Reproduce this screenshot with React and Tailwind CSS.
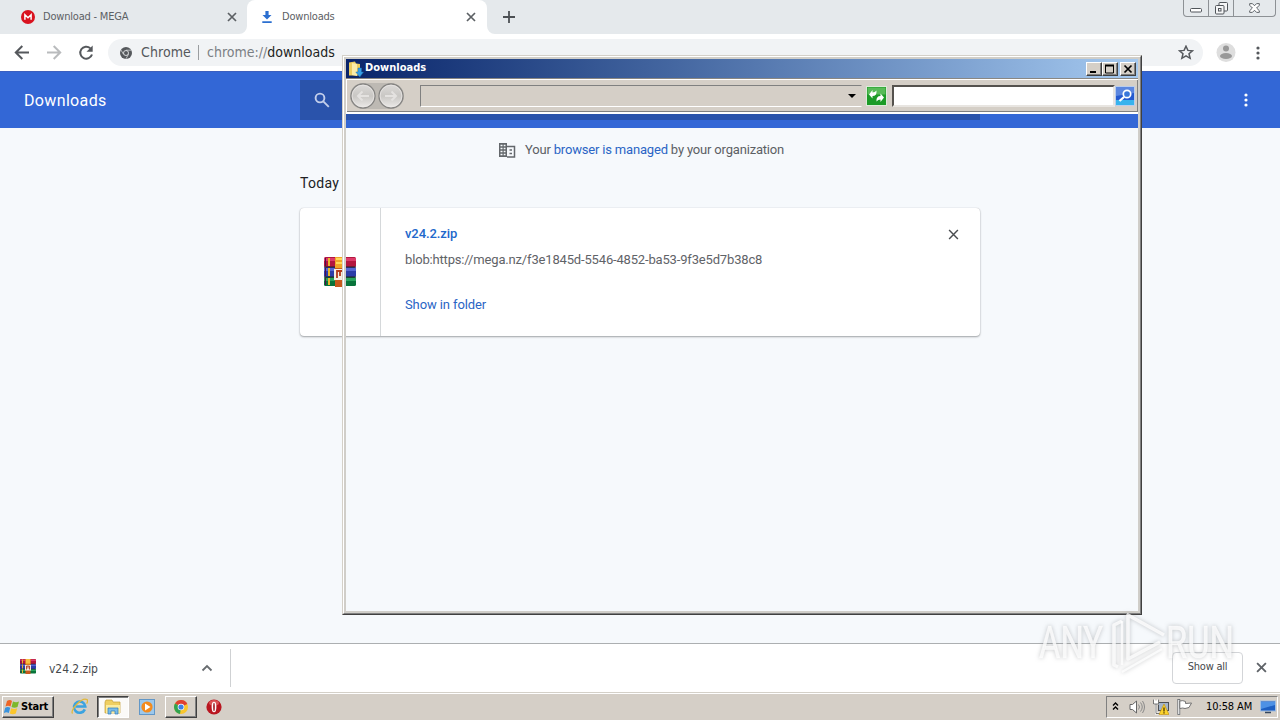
import React from 'react';

const TAHOMA = "font-['DejaVu_Sans_Condensed','DejaVu_Sans',sans-serif]";

const WinrarIcon = ({ className }) => (
    <svg viewBox="0 0 32 30" className={className}>
        <rect x="0" y="0" width="32" height="10" rx="1.5" fill="#b3163f" />
        <rect x="0" y="1" width="32" height="3" fill="#dc3a68" />
        <rect x="0" y="10" width="32" height="10" rx="1.5" fill="#2c3da8" />
        <rect x="0" y="11" width="32" height="3" fill="#5566d2" />
        <rect x="0" y="20" width="32" height="9" rx="1.5" fill="#08733a" />
        <rect x="0" y="21" width="32" height="3" fill="#2aa35d" />
        <path d="M0 10h32M0 20h32" stroke="#222" strokeWidth="1" />
        <path d="M5 1v8M5 11v8M5 21v7" stroke="#e9b62c" strokeWidth="2" />
        <path d="M1.500 1v8M1.500 11v8M1.500 21v7" stroke="#501050" strokeWidth="1" />
        <rect x="11" y="0" width="10" height="30" fill="#c8591d" />
        <path d="M11 0h10v11H11z" fill="#f0a528" />
        <path d="M12 2h8M12 6h8" stroke="#ffd95a" strokeWidth="2" />
        <path d="M10 12h12v11H10z" fill="#f4efe4" />
        <path d="M13 21v-7h6v7M16 14v5" fill="none" stroke="#b33a1c" strokeWidth="1.800" />
    </svg>
);

const CloseIcon = ({ className, strokeWidth = 1.7 }) => (
    <svg viewBox="0 0 10 10" className={className}>
        <path d="M1 1l8 8M9 1l-8 8" stroke="currentColor" strokeWidth={strokeWidth} />
    </svg>
);

const DotsIcon = ({ className }) => (
    <svg viewBox="0 0 4 14" className={className} fill="currentColor">
        <circle cx="2" cy="2" r="1.6" />
        <circle cx="2" cy="7" r="1.6" />
        <circle cx="2" cy="12" r="1.6" />
    </svg>
);

const TabStrip = () => (
    <div className="relative flex h-[34px] shrink-0 bg-[#e5e9ec] text-[#5c6064]">
        <div className="flex w-[247px] items-center pl-[21px]">
            <svg viewBox="0 0 14 14" className="h-[14px] w-[14px]">
                <circle cx="7" cy="7" r="7" fill="#d9121f" />
                <path d="M3.900 9.700V4.800L7 7.700l3.100-2.900v4.900" fill="none" stroke="#fff" strokeWidth="1.500" />
            </svg>
            <span className="ml-2 w-[183px] pt-px text-[11px] tracking-[-0.2px]">Download - MEGA</span>
            <CloseIcon className="ml-[1px] h-[10px] w-[10px]" />
        </div>
        <div className="relative flex w-[240px] items-center rounded-t-lg bg-white pl-[15px]">
            <svg viewBox="0 0 8 8" className="absolute bottom-0 -left-2 h-2 w-2"><path d="M8 0v8H0a8 8 0 0 0 8-8" fill="#fff" /></svg>
            <svg viewBox="0 0 8 8" className="absolute -right-2 bottom-0 h-2 w-2"><path d="M0 0v8h8a8 8 0 0 1-8-8" fill="#fff" /></svg>
            <svg viewBox="0 0 10 12" className="h-3 w-[10px]" fill="#2b6fd0">
                <path d="M3.400 0h3.200v4H9.500L5 8.500.5 4h2.900zM.300 10.300h9.400V12H.300z" />
            </svg>
            <span className="ml-[10px] w-[184px] pt-px text-[11px] tracking-[-0.2px]">Downloads</span>
            <CloseIcon className="h-[10px] w-[10px]" />
        </div>
        <svg viewBox="0 0 12 12" className="mt-[11px] ml-4 h-3 w-3">
            <path d="M6 0v12M0 6h12" stroke="#4c5054" strokeWidth="1.800" />
        </svg>
        <div className="mr-[4px] ml-auto flex h-[17px] w-[93px] rounded-b-[4px] border border-t-0 border-[#8d9195] text-[#50555a]">
            <div className="flex w-[25px] items-center justify-center border-r border-[#8d9195]">
                <svg viewBox="0 0 12 5" className="mt-[4px] h-[5px] w-3"><rect x=".5" y=".5" width="11" height="3.500" rx="1" fill="#fff" stroke="currentColor" /></svg>
            </div>
            <div className="flex w-[25px] items-center justify-center border-r border-[#8d9195]">
                <svg viewBox="0 0 13 13" className="h-[13px] w-[13px]" fill="#f4f5f6" stroke="currentColor">
                    <rect x="4" y=".5" width="8.500" height="8.500" rx="1" />
                    <rect x=".5" y="3.500" width="8.500" height="8.500" rx="1" />
                    <rect x="3.500" y="6.500" width="2.500" height="2.500" />
                </svg>
            </div>
            <div className="flex flex-1 items-center justify-center">
                <svg viewBox="0 0 12 11" className="h-[10px] w-[11px]" fill="#fff" stroke="currentColor">
                    <path d="M.700.700h3L6 3l2.300-2.300h3v1.800L8.300 5.500l3 3v1.800h-3L6 8l-2.300 2.300h-3V8.500l3-3-3-3z" />
                </svg>
            </div>
        </div>
    </div>
);

const AddressBar = () => (
    <div className="flex h-[37px] shrink-0 items-center bg-white pl-[14px] text-[#55585c]">
        <svg viewBox="0 0 16 16" className="h-4 w-4" fill="none" stroke="currentColor" strokeWidth="2">
            <path d="M15 7.500H2M8.300 1L1.800 7.500l6.500 6.500" />
        </svg>
        <svg viewBox="0 0 16 16" className="ml-4 h-4 w-4 text-[#b9bbbd]" fill="none" stroke="currentColor" strokeWidth="2">
            <path d="M1 7.500h13M7.700 1L14.200 7.500l-6.500 6.500" />
        </svg>
        <svg viewBox="0 0 16 16" className="ml-4 h-4 w-4">
            <path d="M14 9.500A6 6 0 1 1 12.300 3.200" fill="none" stroke="currentColor" strokeWidth="2" />
            <path d="M14.700.500v6.200H8.500z" fill="currentColor" />
        </svg>
        <div className="ml-[14px] flex h-[27px] w-[1095px] items-center rounded-full bg-[#f1f3f5] pl-[12px] text-[14px]">
            <svg viewBox="0 0 12 12" className="h-3 w-3">
                <circle cx="6" cy="6" r="6" fill="#55585c" />
                <circle cx="6" cy="6" r="2.500" fill="#55585c" stroke="#e4e6e8" strokeWidth=".9" />
                <path d="M6 3.200h5.300M3.500 7.300L.9 2.900M8.500 7.300L5.900 11.900" stroke="#e4e6e8" strokeWidth=".7" />
            </svg>
            <span className="ml-[9px] w-[50px] whitespace-nowrap tracking-[0.1px]">Chrome</span>
            <span className="mr-[8px] ml-[7px] h-[15px] w-px bg-[#9a9da0]" />
            <span className="whitespace-nowrap text-[#7b7f84]">chrome://<span className="text-[#1d1f22]">downloads</span></span>
            <svg viewBox="0 0 16 16" className="mr-[9px] ml-auto h-4 w-4" fill="none" stroke="currentColor" strokeWidth="1.500">
                <path d="M8 1.200l1.900 4.200 4.600.400-3.500 3 1.100 4.500L8 10.900l-4.100 2.400L5 8.800l-3.500-3 4.600-.400z" />
            </svg>
        </div>
        <svg viewBox="0 0 20 20" className="ml-[13px] h-5 w-5">
            <circle cx="10" cy="9.500" r="9.500" fill="#dedede" />
            <circle cx="10" cy="5.500" r="3" fill="#989898" />
            <ellipse cx="10" cy="13" rx="6" ry="3" fill="#989898" />
        </svg>
        <DotsIcon className="ml-5 h-[14px] w-1" />
    </div>
);

const DownloadsPage = () => (
    <div className="flex-1 bg-[#f6f9fc] font-[Roboto,sans-serif]">
        <div className="flex h-[57px] items-center border-t border-[#3a5fc0] bg-[#3367d6] pl-6 text-white">
            <span className="w-[276px] pt-[2px] text-[16px] tracking-[0.35px]">Downloads</span>
            <div className="flex h-10 w-[680px] items-center bg-[#2a53ab] pl-[14px]">
                <svg viewBox="0 0 16 16" className="h-4 w-4" fill="none" stroke="#c3cfeb" strokeWidth="1.900">
                    <circle cx="6" cy="6" r="4.400" />
                    <path d="M9.300 9.300l5.500 5.500" />
                </svg>
            </div>
            <DotsIcon className="mr-8 ml-auto h-[14px] w-1" />
        </div>
        <div className="mx-auto w-[680px]">
            <div className="flex h-[44px] items-center pl-[198px] text-[13px] text-[#5c6064]">
                <svg viewBox="0 0 18 16" className="mr-[9px] h-4 w-[18px]">
                    <path d="M1 1h8v14H1z" fill="#63676b" />
                    <path d="M9 4.500h7.500V15H9" fill="none" stroke="#63676b" strokeWidth="1.500" />
                    <path d="M2.500 3.500h5M2.500 6.500h5M2.500 9.500h5M2.500 12.500h5" stroke="#f6f9fc" strokeWidth="1.400" strokeDasharray="2 1.200" />
                    <path d="M11.500 8h2.500M11.500 11.500h2.500" stroke="#63676b" strokeWidth="1.700" />
                </svg>
                <span className="whitespace-nowrap tracking-[-0.18px]">Your <span className="text-[#2a65c5]">browser is managed</span> by your organization</span>
            </div>
            <div className="flex h-[36px] items-center pb-[14px] text-[14px] tracking-[0.3px] text-[#202124]">Today</div>
            <div className="flex h-[128px] rounded-[4px] bg-white shadow-[0_1px_2px_rgba(60,64,67,0.45),0_0_1px_rgba(60,64,67,0.3)]">
                <div className="flex w-[81px] items-center justify-center border-r border-[#d5d8da]">
                    <WinrarIcon className="h-[30px] w-8" />
                </div>
                <div className="relative flex-1 pl-6 text-[13px] leading-4 text-[#5f6368]">
                    <div className="mt-[18px] font-medium tracking-[-0.1px] text-[#2268cb]">v24.2.zip</div>
                    <div className="mt-[10px] whitespace-nowrap tracking-[-0.165px]">blob:https://mega.nz/f3e1845d-5546-4852-ba53-9f3e5d7b38c8</div>
                    <div className="mt-[29px] tracking-[-0.1px] text-[#2a65c5]">Show in folder</div>
                    <CloseIcon strokeWidth={1.3} className="absolute top-[21px] right-[21px] h-[11px] w-[11px] text-[#4a4d50]" />
                </div>
            </div>
        </div>
    </div>
);

const DownloadShelf = () => (
    <div className="flex h-[49px] shrink-0 items-center border-t border-[#acafb1] bg-white text-[#45484b]">
        <div className="flex h-[38px] w-[231px] items-center border-r border-[#cfd1d3] pl-5">
            <WinrarIcon className="mb-[3px] h-[15px] w-4" />
            <span className="ml-[13px] w-[152px] pt-[2px] text-[12px] tracking-[-0.05px]">v24.2.zip</span>
            <svg viewBox="0 0 12 8" className="h-2 w-3"><path d="M1.500 6.500L6 2l4.500 4.500" fill="none" stroke="#686c70" strokeWidth="1.800" /></svg>
        </div>
        <div className="ml-auto flex h-8 w-[71px] items-center justify-center rounded-[4px] border border-[#d3d5d8] pb-px text-[11px] tracking-[-0.25px]">Show all</div>
        <CloseIcon className="mr-[13px] mb-[2px] ml-[13px] h-[11px] w-[11px] text-[#5f6368]" />
    </div>
);

const WindowsFlag = () => (
    <svg viewBox="0 0 16 16" className="mb-px h-4 w-4">
        <path d="M3 2q3-2 5 0L6.500 7.500q-2.500-1.500-5 0z" fill="#ee6526" />
        <path d="M9 2.500q3 1.500 6 0L13.500 8q-3 1.500-6 0z" fill="#7db82c" />
        <path d="M1.200 8.700q2.500-1.500 5 0L4.800 14q-2.500-1.500-5 0z" fill="#3a93dd" />
        <path d="M7.200 9.200q3 1.500 6 0L11.800 14.500q-3 1.500-6 0z" fill="#fbc62b" />
    </svg>
);

const Taskbar = () => (
    <div className="flex h-[28px] shrink-0 items-center border-t border-[#d4d0c8] bg-[#d5cfc7] text-black shadow-[inset_0_1px_0_#fff]">
        <div className="mt-px ml-[2px] flex h-[22px] w-[52px] items-center border border-t-white border-r-[#404040] border-b-[#404040] border-l-white pl-px shadow-[inset_-1px_-1px_0_#808080]">
            <WindowsFlag />
            <span className="pt-px pl-px text-[11px] font-bold tracking-[-0.2px]">Start</span>
        </div>
        <svg viewBox="0 0 16 16" className="ml-[17px] h-[17px] w-[17px]">
            <path d="M13 10.700A5.300 5.300 0 1 1 13.400 8H4.500" fill="none" stroke="#3ba3e0" strokeWidth="2.500" />
            <path d="M1.500 14.500C-1.500 12 10-1 15 1.500c1 .800.500 2.500-.300 3.700" fill="none" stroke="#e2b93b" strokeWidth="1.200" />
        </svg>
        <div className="mt-px ml-[9px] flex h-[22px] w-8 items-center justify-center border border-t-[#404040] border-r-white border-b-white border-l-[#404040] bg-[#fbfaf8] shadow-[inset_1px_1px_0_#808080]">
            <svg viewBox="0 0 18 16" className="h-4 w-[18px]">
                <path d="M1 3l1-2h6l1 2h7v11H1z" fill="#efcf62" stroke="#c59e36" strokeWidth=".7" />
                <path d="M2 6h14v8H2z" fill="#fbeb9f" />
                <path d="M4 15V9h10v6h-3v-3H7v3z" fill="#79bbe8" stroke="#2d7dbb" strokeWidth=".7" />
            </svg>
        </div>
        <svg viewBox="0 0 16 16" className="ml-[10px] h-4 w-4">
            <rect x=".5" y=".5" width="15" height="15" fill="#9cc8ec" stroke="#6297c7" />
            <circle cx="8" cy="8" r="5.600" fill="#f38b1e" />
            <path d="M6 4.500L11.500 8 6 11.500z" fill="#fff" />
        </svg>
        <div className="mt-px ml-[10px] flex h-[22px] w-8 items-center justify-center border border-t-white border-r-[#404040] border-b-[#404040] border-l-white pr-px shadow-[inset_-1px_-1px_0_#808080]">
            <svg viewBox="0 0 14 14" className="h-[14px] w-[14px]">
                <circle cx="7" cy="7" r="7" fill="#f9c62d" />
                <path d="M7 7L1 3.500A7 7 0 0 1 13.300 4z" fill="#df4032" />
                <path d="M7 7L1 3.500A7 7 0 0 0 6 14z" fill="#31a350" />
                <circle cx="7" cy="7" r="3.300" fill="#fff" />
                <circle cx="7" cy="7" r="2.600" fill="#3e80e5" />
            </svg>
        </div>
        <svg viewBox="0 0 16 16" className="ml-[9px] h-4 w-4">
            <circle cx="8" cy="8" r="7.600" fill="#b91620" />
            <ellipse cx="8" cy="4" rx="5" ry="3" fill="#db5355" />
            <ellipse cx="8" cy="8" rx="2.400" ry="5.300" fill="#fff" />
            <ellipse cx="8" cy="8" rx=".8" ry="4.200" fill="#9b1018" />
        </svg>
        <div className="mt-px mr-[2px] ml-auto flex h-[22px] w-[172px] items-center border border-t-[#808080] border-r-white border-b-white border-l-[#808080] pl-[5px]">
            <svg viewBox="0 0 7 9" className="mb-[2px] h-[9px] w-[7px]"><path d="M1 3.500l2.500-2.500L6 3.500M1 7.500L3.500 5 6 7.500" fill="none" stroke="#000" strokeWidth="1.400" /></svg>
            <svg viewBox="0 0 16 16" className="ml-[10px] h-4 w-4">
                <path d="M1 5.500h2.500L7.500 2v12l-4-3.500H1z" fill="#fff" stroke="#666" />
                <path d="M9.500 5.500q2 2.500 0 5M11.500 3.500q3.500 4.500 0 9M13.500 2q4 6 0 12" fill="none" stroke="#898989" />
            </svg>
            <svg viewBox="0 0 16 16" className="ml-2 h-4 w-4">
                <rect x="5.500" y="3.500" width="10" height="8" fill="#a4b5ca" stroke="#4b4f55" />
                <path d="M1 .500v4h4v-4M3 4.500v10h5M1 2.500h4" fill="none" stroke="#fff" strokeWidth="2" />
                <path d="M.500.500v4.500h5V.500M3 5v9.500h5" fill="none" stroke="#555" strokeWidth=".8" />
                <path d="M11 5l5 10.500H6z" fill="#fbd32c" stroke="#c18d08" strokeWidth=".6" />
                <path d="M11 8.500v4M11 13.300v1.200" stroke="#4a3300" strokeWidth="1.300" />
            </svg>
            <svg viewBox="0 0 16 16" className="ml-2 h-4 w-4">
                <rect x=".8" y=".5" width="2" height="15" fill="#fff" stroke="#62666b" strokeWidth=".8" />
                <path d="M2.800 2q3-1 5.700.5v2l6-.5-2.500 4.500-4 1q-2-1-5.200 0z" fill="#fff" stroke="#666" strokeWidth=".9" />
            </svg>
            <span className="ml-[13px] w-[50px] pt-px text-[11px] tracking-[-0.1px] whitespace-nowrap">10:58 AM</span>
            <svg viewBox="0 0 16 14" className="mr-px ml-auto h-[14px] w-4">
                <rect x=".5" y="1" width="15" height="10" fill="#1d5fc2" stroke="#9fbde2" />
                <path d="M1 2h14v3L1 9z" fill="#4d91e5" />
                <path d="M5 12.500h6" stroke="#33465f" strokeWidth="1.500" />
            </svg>
        </div>
    </div>
);

const CaptionButton = ({ children, className = '' }) => (
    <div className={`flex h-[14px] w-4 items-center justify-center border border-t-white border-r-[#404040] border-b-[#404040] border-l-white bg-[#d5cfc7] shadow-[inset_-1px_-1px_0_#808080] ${className}`}>
        <svg viewBox="0 0 12 10" className="h-[10px] w-3" fill="none" stroke="#000">{children}</svg>
    </div>
);

const NavCircle = ({ flip }) => (
    <svg viewBox="0 0 26 26" className="h-[26px] w-[26px]">
        <defs>
            <linearGradient id="nav" x1="0" y1="0" x2="0" y2="1">
                <stop offset="0" stopColor="#dddbd9" />
                <stop offset=".5" stopColor="#c9c7c4" />
                <stop offset="1" stopColor="#edebe9" />
            </linearGradient>
        </defs>
        <circle cx="13" cy="13" r="12" fill="url(#nav)" stroke="#858482" strokeWidth="1.300" />
        <circle cx="13" cy="13" r="10.900" fill="none" stroke="#eceae8" strokeWidth=".7" />
        <path d={flip ? 'M7 13h11M13.500 8.500L18 13l-4.500 4.500' : 'M19 13H8M12.500 8.500L8 13l4.500 4.500'} fill="none" stroke="#e4e2e0" strokeWidth="2" />
    </svg>
);

// Explorer window whose client area has not painted yet, so the page shows through
const ExplorerWindow = () => (
    <div className="absolute top-[55px] left-[342px] flex h-[560px] w-[800px] flex-col border border-t-[#d4d0c8] border-r-[#404040] border-b-[#404040] border-l-[#d4d0c8]">
        <div className="flex flex-1 flex-col border border-t-white border-r-[#808080] border-b-[#808080] border-l-white">
            <div className="flex flex-1 flex-col border-2 border-[#d0cec9]">
                <div className="flex h-[19px] items-center bg-linear-to-r from-[#0a246a] to-[#a6caf0] pr-[2px] pl-[2px]">
                    <svg viewBox="0 0 16 16" className="h-4 w-4">
                        <path d="M1 1.500l6-1 1 2 4 .5v11.500H1z" fill="#edce60" />
                        <path d="M4 2l5 1v12l-5-1z" fill="#fbedaa" />
                        <path d="M10 7h3.500v4h2L11.800 16l-4-5H10z" fill="#36a0e9" stroke="#1d6dae" strokeWidth=".5" />
                    </svg>
                    <span className="ml-[1px] text-[11px] font-bold tracking-[0.02px] text-white">Downloads</span>
                    <CaptionButton className="ml-auto"><path d="M2 8h6" strokeWidth="2" /></CaptionButton>
                    <CaptionButton><path d="M1.500 1v8h8V1M1 1.500h9" /><path d="M1 1.500h9" strokeWidth="2" /></CaptionButton>
                    <CaptionButton className="ml-[2px]"><path d="M2.500 1.500l7 7M9.500 1.500l-7 7" strokeWidth="1.700" /></CaptionButton>
                </div>
                <div className="flex h-[36px] items-center border-t border-b-2 border-t-[#8a8782] border-b-white bg-[#d5cfc7] pl-[4px] shadow-[inset_1px_1px_0_#fff,inset_-1px_-1px_0_#808080]">
                    <div className="flex items-center rounded-full bg-[#bdb9b3]">
                        <NavCircle />
                        <div className="ml-[2px]"><NavCircle flip /></div>
                    </div>
                    <div className="ml-[16px] flex h-[22px] w-[442px] items-center justify-end border border-t-[#808080] border-r-[#d5cfc7] border-b-white border-l-[#808080] pr-[5px]">
                        <svg viewBox="0 0 8 4" className="h-1 w-2"><path d="M0 0h8L4 4z" /></svg>
                    </div>
                    <svg viewBox="0 0 21 20" className="ml-1 h-5 w-[21px]">
                        <rect x=".5" y=".5" width="20" height="19" fill="#1c9b27" stroke="#dcebd8" />
                        <path d="M1.500 1.500h18v7h-18z" fill="#58bb58" />
                        <path d="M3 8.500L6.500 4v2.500Q9 6.500 10.500 4.500 11 10 6.500 10v2.500z" fill="#fff" />
                        <path d="M18 11.500L14.500 16v-2.500Q12 13.500 10.500 15.500 10 10 14.500 10V7.500z" fill="#fff" />
                    </svg>
                    <div className="ml-[5px] h-[22px] w-[223px] border-2 border-t-[#55524e] border-r-[#e8e5e1] border-b-[#e8e5e1] border-l-[#55524e] bg-white" />
                    <svg viewBox="0 0 20 20" className="h-5 w-5">
                        <rect x=".5" y=".5" width="19" height="19" fill="#2459cf" stroke="#b9cdec" />
                        <path d="M1 14h18v5H1z" fill="#37b3ed" />
                        <path d="M1 1h18v6L1 10z" fill="#5b86df" />
                        <circle cx="12" cy="8" r="3.700" fill="#3977da" stroke="#fff" strokeWidth="1.700" />
                        <path d="M9 11l-4.500 4" stroke="#fff" strokeWidth="2.300" />
                    </svg>
                </div>
            </div>
        </div>
    </div>
);

const Watermark = () => (
    <svg viewBox="0 0 230 70" className="absolute top-[606px] left-[1036px] h-[70px] w-[230px] overflow-visible drop-shadow-[0_0_2px_rgba(110,114,118,0.5)]">
        <g className="font-[Roboto,sans-serif] text-[45px]" fill="#fff" fillOpacity=".78" stroke="#fff" strokeOpacity=".5" strokeWidth=".7">
            <text x="3" y="52" textLength="64" lengthAdjust="spacingAndGlyphs">ANY</text>
            <text x="130" y="52" textLength="68" lengthAdjust="spacingAndGlyphs">RUN</text>
        </g>
        <g fill="none" stroke="#fff" strokeOpacity=".78" strokeWidth="3.600" strokeLinejoin="round">
            <path d="M86 15l-8 4v40l4 2" />
            <path d="M128 29L92 9v44L124 36" />
            <path d="M86 66l40-23M86 15v44" strokeWidth="2.500" />
        </g>
    </svg>
);

export default function App() {
    return (
        <div className={`relative flex h-[720px] w-[1280px] flex-col overflow-hidden ${TAHOMA}`}>
            <TabStrip />
            <AddressBar />
            <DownloadsPage />
            <DownloadShelf />
            <Taskbar />
            <ExplorerWindow />
            <Watermark />
        </div>
    );
}
